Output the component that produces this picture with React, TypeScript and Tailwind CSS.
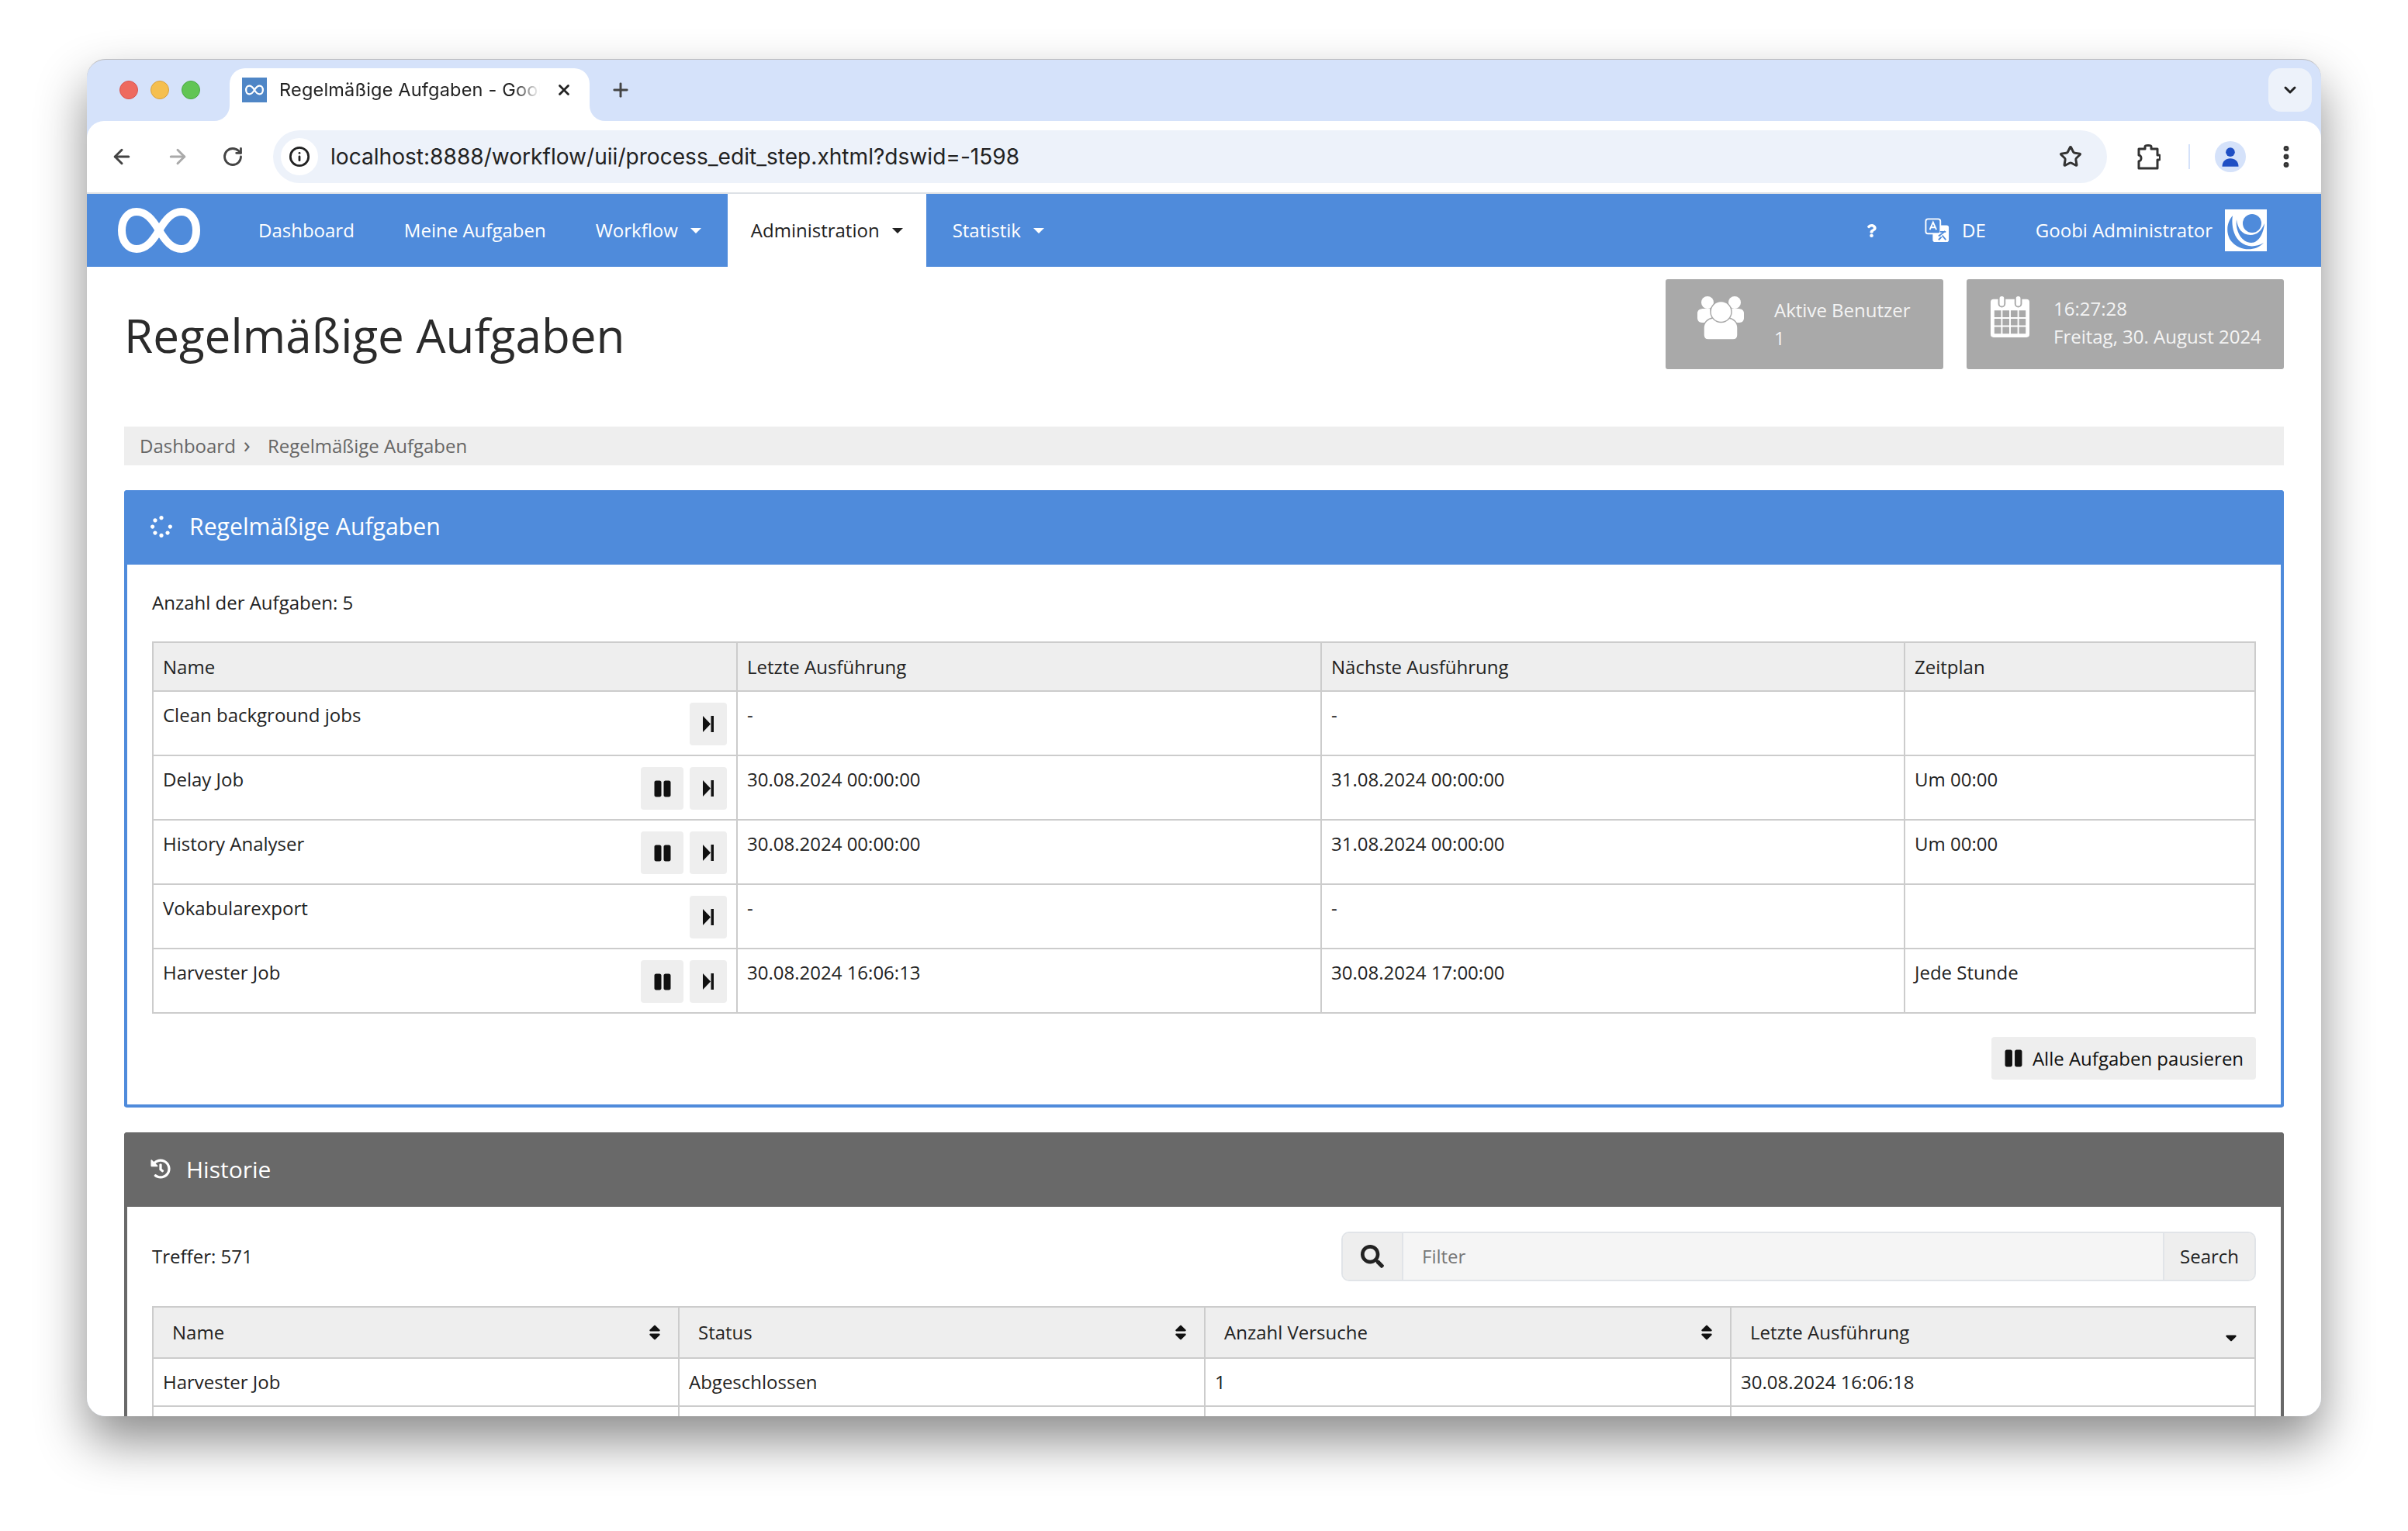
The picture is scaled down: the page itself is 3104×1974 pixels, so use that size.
import React from 'react';
import {
  ArrowLeft,
  ArrowRight,
  RotateCw,
  Info,
  Star,
  EllipsisVertical,
  ChevronDown,
  Plus,
  X,
} from 'lucide-react';
import {
  FaHistory,
  FaPause,
  FaSearch,
  FaSort,
  FaSortDown,
  FaSpinner,
  FaQuestion,
} from 'react-icons/fa';

const jobs = [
  { name: 'Clean background jobs', last: '-', next: '-', plan: '', pause: false },
  { name: 'Delay Job', last: '30.08.2024 00:00:00', next: '31.08.2024 00:00:00', plan: 'Um 00:00', pause: true },
  { name: 'History Analyser', last: '30.08.2024 00:00:00', next: '31.08.2024 00:00:00', plan: 'Um 00:00', pause: true },
  { name: 'Vokabularexport', last: '-', next: '-', plan: '', pause: false },
  { name: 'Harvester Job', last: '30.08.2024 16:06:13', next: '30.08.2024 17:00:00', plan: 'Jede Stunde', pause: true },
];

function Logo({ className }: { className: string }) {
  return (
    <svg viewBox="0 0 106 60" className={className} fill="none">
      <path
        d="M53 30C44 15 36 6 24 6C12 6 5 17 5 30C5 43 12 54 24 54C36 54 44 45 53 30C62 15 70 6 82 6C94 6 101 17 101 30C101 43 94 54 82 54C70 54 62 45 53 30Z"
        stroke="white"
        strokeWidth="10"
      />
    </svg>
  );
}

function Caret() {
  return <span className="ml-[16px] inline-block border-x-[7px] border-t-[7px] border-x-transparent border-t-current align-middle" />;
}

function NavItem({ label, caret, active }: { label: string; caret?: boolean; active?: boolean }) {
  return (
    <div className={`flex h-full items-center pl-[30px] ${active ? 'mr-[4px] bg-white pr-[30px] text-[#222]' : 'pr-[34px] text-white'}`}>
      {label}
      {caret && <Caret />}
    </div>
  );
}

function UsersIcon() {
  return (
    <svg viewBox="0 0 62 58" className="h-[58px] w-[62px]" fill="white">
      <circle cx="14" cy="9" r="8" />
      <circle cx="49" cy="9" r="8" />
      <path d="M1 23c0-4 3-6 8-6h8l4 18H7c-4 0-6-3-6-6z" />
      <path d="M61 23c0-4-3-6-8-6h-8l-4 18h14c4 0 6-3 6-6z" />
      <path
        d="M9 42c0-7 5-12 12-13h20c7 1 12 6 12 13v9c0 4-3 6-6 6H15c-3 0-6-2-6-6z"
        stroke="#a9a9a9"
        strokeWidth="1.5"
      />
      <circle cx="31.5" cy="21" r="13.5" stroke="#a9a9a9" strokeWidth="1.5" />
    </svg>
  );
}

function CalendarIcon() {
  return (
    <svg viewBox="0 0 54 58" className="h-[56px] w-[52px]">
      <rect x="1" y="6" width="52" height="51" rx="4" fill="white" />
      <rect x="12" y="1" width="8" height="15" rx="4" fill="white" stroke="#a9a9a9" strokeWidth="2" />
      <rect x="34" y="1" width="8" height="15" rx="4" fill="white" stroke="#a9a9a9" strokeWidth="2" />
      <path
        d="M5 20h44v33H5zM5 31h44M5 42h44M16 20v33M27 20v33M38 20v33"
        fill="#a9a9a9"
        stroke="white"
        strokeWidth="2"
      />
    </svg>
  );
}

function LanguageIcon() {
  return (
    <svg viewBox="0 0 34 34" className="h-[32px] w-[32px]" fill="none">
      <rect x="11" y="10" width="22" height="23" rx="3" fill="white" />
      <rect x="1.5" y="1.5" width="20" height="20" rx="3" fill="#4f8bdb" stroke="white" strokeWidth="2" />
      <path d="M7 16l4.5-10L16 16M8.5 13h6" stroke="white" strokeWidth="2" />
      <path d="M19 25l9-7M21 19h8M24 24l5 6M23 26l-4 4" stroke="#4f8bdb" strokeWidth="2" />
    </svg>
  );
}

function AvatarIcon() {
  return (
    <div className="ml-[16px] h-[54px] w-[54px] bg-white">
      <svg viewBox="0 0 54 54" className="h-full w-full" fill="#4f8bdb">
        <circle cx="35" cy="18" r="12" />
        <path d="M15 13C13 28 22 43 34 43C44 43 50 30 51 18C47 28 41 33 33 33C22 33 16 24 15 13Z" />
        <path d="M10 8C1 18 1 34 10 43C18 52 38 56 50 43C40 49 28 49 20 42C11 35 8 20 10 8Z" />
      </svg>
    </div>
  );
}

function PuzzleIcon() {
  return (
    <svg viewBox="0 0 30 33" className="ml-[39px] h-[33px] w-[30px]" fill="none" stroke="#333" strokeWidth="3" strokeLinejoin="round">
      <path d="M2 6h8V3c0-2 8-2 8 0v3h8v8h2c2 0 2 6 0 6h-2v11H2V22c3-1 3-2 3-4s0-3-3-4z" />
    </svg>
  );
}

function StepIcon() {
  return (
    <svg viewBox="0 0 14 21" className="h-[21px] w-[14px]" fill="currentColor">
      <path d="M0 0l10 10.500L0 21z" />
      <rect x="10.500" y="0" width="3.500" height="21" />
    </svg>
  );
}

function SquareButton({ children, className }: { children: React.ReactNode; className: string }) {
  return (
    <button type="button" className={`flex h-[55px] items-center justify-center rounded-[4px] bg-[#eee] text-[#111] ${className}`}>
      {children}
    </button>
  );
}

function InfoCard({ icon, top, bottom, className, iconBox, textBox }: { icon: React.ReactNode; top: string; bottom: string; className: string; iconBox: string; textBox: string }) {
  return (
    <div className={`flex h-[116px] rounded-[3px] bg-[#a9a9a9] text-[#f4f4f4] ${className}`}>
      <div className={iconBox}>{icon}</div>
      <div className={`flex flex-col leading-[36px] ${textBox}`}>
        <span>{top}</span>
        <span>{bottom}</span>
      </div>
    </div>
  );
}

const th = 'border-2 border-[#ccc] bg-[#eee] px-[12px] text-left font-normal';
const td = 'border-2 border-[#ccc] px-[12px]';

export default function App() {
  return (
    <div className="h-[1974px] w-[3104px] overflow-hidden bg-white pl-[112px] pt-[76px] font-['Open_Sans',sans-serif] text-[24px] text-[#222]">
      <div className="flex h-[1750px] w-[2880px] flex-col overflow-hidden rounded-[24px] border-t border-[#bbb] bg-[#d5e2fa] shadow-[0_32px_64px_rgba(0,0,0,0.45)]">
        {/* tab strip */}
        <div className="flex h-[79px] shrink-0 items-end font-['Inter',sans-serif] text-[23px]">
          <div className="flex h-[68px] w-[184px] items-start gap-[16px] pl-[42px] pt-[16px]">
            <span className="h-[24px] w-[24px] rounded-full border border-[#d9534f] bg-[#ee6a5f]" />
            <span className="h-[24px] w-[24px] rounded-full border border-[#d9a13c] bg-[#f5bf4f]" />
            <span className="h-[24px] w-[24px] rounded-full border border-[#4aa845] bg-[#61c554]" />
          </div>
          <div className="relative flex h-[68px] w-[464px] items-start rounded-t-[20px] bg-white pl-[16px] pt-[12px] text-[#222]">
            <span className="absolute -left-[20px] bottom-0 h-[20px] w-[20px] bg-white">
              <span className="block h-full w-full rounded-br-[20px] bg-[#d5e2fa]" />
            </span>
            <span className="absolute -right-[20px] bottom-0 h-[20px] w-[20px] bg-white">
              <span className="block h-full w-full rounded-bl-[20px] bg-[#d5e2fa]" />
            </span>
            <span className="flex h-[32px] w-[32px] items-center justify-center bg-[#4f86c6]">
              <Logo className="h-[14px] w-[24px]" />
            </span>
            <span className="ml-[16px] w-[336px] overflow-hidden whitespace-nowrap text-[23.500px] leading-[32px] tracking-[0.2px] text-[#222] [mask-image:linear-gradient(90deg,black_90%,transparent)]">
              Regelmäßige Aufgaben - Goobi
            </span>
            <X className="ml-[20px] mt-[5px] h-[22px] w-[22px] text-[#222]" strokeWidth={3} />
          </div>
          <Plus className="mb-[26px] ml-[26px] h-[28px] w-[28px] text-[#444]" strokeWidth={2.5} />
          <div className="mb-[12px] ml-auto mr-[12px] flex h-[56px] w-[56px] items-center justify-center rounded-[16px] bg-[#edf2fa]">
            <ChevronDown className="h-[24px] w-[24px] text-[#222]" strokeWidth={3} />
          </div>
        </div>

        {/* toolbar */}
        <div className="flex h-[94px] shrink-0 items-center rounded-t-[22px] border-b-2 border-[#dde1e6] bg-white text-[#444]">
          <div className="flex w-[240px] items-center gap-[42px] pl-[30px]">
            <ArrowLeft className="h-[30px] w-[30px]" strokeWidth={2.4} />
            <ArrowRight className="h-[30px] w-[30px] text-[#aaa]" strokeWidth={2.4} />
            <RotateCw className="h-[28px] w-[28px]" strokeWidth={2.4} />
          </div>
          <div className="flex h-[68px] w-[2364px] items-center rounded-full bg-[#edf2fa] pl-[10px] pr-[32px]">
            <span className="flex h-[48px] w-[48px] items-center justify-center rounded-full bg-white">
              <Info className="h-[28px] w-[28px] text-[#222]" strokeWidth={2.4} />
            </span>
            <span className="ml-[16px] font-['Inter',sans-serif] text-[28.100px] text-[#222]">
              localhost:8888/workflow/uii/process_edit_step.xhtml?dswid=-1598
            </span>
            <Star className="ml-auto h-[30px] w-[30px] text-[#333]" strokeWidth={2.4} />
          </div>
          <PuzzleIcon />
          <span className="ml-[36px] h-[32px] w-[2px] bg-[#d5e2fa]" />
          <span className="ml-[32px] flex h-[40px] w-[40px] items-center justify-center rounded-full bg-[#d5e2fa]">
            <svg viewBox="0 0 24 24" className="h-[28px] w-[28px]" fill="#1f4fc4">
              <circle cx="12" cy="7" r="5" />
              <path d="M3 23c0-6 4-9 9-9s9 3 9 9z" />
            </svg>
          </span>
          <EllipsisVertical className="ml-[34px] h-[36px] w-[36px] text-[#333]" strokeWidth={2.6} />
        </div>

        {/* page */}
        <div className="flex min-h-0 flex-1 flex-col overflow-hidden bg-white">
          <nav className="flex h-[94px] shrink-0 items-center bg-[#4f8bdb] pl-[40px] pr-[70px]">
            <Logo className="mr-[45px] h-[60px] w-[106px]" />
            <NavItem label="Dashboard" />
            <NavItem label="Meine Aufgaben" />
            <NavItem label="Workflow" caret />
            <NavItem label="Administration" caret active />
            <NavItem label="Statistik" caret />
            <div className="ml-auto flex items-center text-white">
              <FaQuestion className="h-[17px] w-[17px]" />
              <span className="ml-[60px]">
                <LanguageIcon />
              </span>
              <span className="ml-[16px]">DE</span>
              <span className="ml-[64px]">Goobi Administrator</span>
              <AvatarIcon />
            </div>
          </nav>

          <div className="flex flex-col px-[48px]">
            <header className="flex h-[206px] justify-between pt-[16px]">
              <h1 className="pt-[32px] text-[60.200px] leading-[80px] text-[#2b2b2b]">Regelmäßige Aufgaben</h1>
              <div className="flex gap-[30px]">
                <InfoCard
                  className="w-[358px]"
                  iconBox="pl-[40px] pr-[38px] pt-[21px]"
                  textBox="pt-[22px]"
                  icon={<UsersIcon />}
                  top="Aktive Benutzer"
                  bottom="1"
                />
                <InfoCard
                  className="w-[409px]"
                  iconBox="pl-[30px] pr-[30px] pt-[20px]"
                  textBox="pt-[20px]"
                  icon={<CalendarIcon />}
                  top="16:27:28"
                  bottom="Freitag, 30. August 2024"
                />
              </div>
            </header>

            <div className="flex h-[50px] items-center bg-[#eee] px-[20px] text-[#666]">
              Dashboard <span className="ml-[10px] mr-[22px] pb-[4px] text-[30px] leading-none">›</span> Regelmäßige Aufgaben
            </div>

            {/* jobs */}
            <section className="mt-[32px] rounded-[4px] border-4 border-t-0 border-[#4f8bdb]">
              <div className="-mx-[4px] flex h-[96px] items-center rounded-t-[4px] bg-[#4f8bdb] pb-[2px] pl-[34px] text-[30.200px] text-white">
                <FaSpinner className="h-[28px] w-[28px]" />
                <span className="ml-[22px]">Regelmäßige Aufgaben</span>
              </div>
              <div className="flex flex-col px-[32px] pb-[32px]">
                <p className="flex h-[99px] items-center pb-[1px]">Anzahl der Aufgaben: 5</p>
                <table className="w-full table-fixed border-collapse">
                  <thead>
                    <tr className="h-[63px]">
                      <th className={`${th} w-[753px]`}>Name</th>
                      <th className={`${th} w-[753px]`}>Letzte Ausführung</th>
                      <th className={`${th} w-[752px]`}>Nächste Ausführung</th>
                      <th className={th}>Zeitplan</th>
                    </tr>
                  </thead>
                  <tbody>
                    {jobs.map((job) => (
                      <tr key={job.name} className="h-[83px]">
                        <td className={`${td} pt-[12px] align-top`}>
                          <div className="flex items-start justify-between">
                            <span className="leading-[36px]">{job.name}</span>
                            <div className="flex gap-[8px] pt-[2px]">
                              {job.pause && (
                                <SquareButton className="w-[55px]">
                                  <FaPause className="h-[24px] w-[24px]" />
                                </SquareButton>
                              )}
                              <SquareButton className="w-[48px]">
                                <StepIcon />
                              </SquareButton>
                            </div>
                          </div>
                        </td>
                        <td className={`${td} pt-[12px] align-top leading-[36px]`}>{job.last}</td>
                        <td className={`${td} pt-[12px] align-top leading-[36px]`}>{job.next}</td>
                        <td className={`${td} pt-[12px] align-top leading-[36px]`}>{job.plan}</td>
                      </tr>
                    ))}
                  </tbody>
                </table>
                <div className="mt-[30px] flex justify-end">
                  <SquareButton className="w-[341px] gap-[12px]">
                    <FaPause className="h-[25px] w-[25px]" />
                    Alle Aufgaben pausieren
                  </SquareButton>
                </div>
              </div>
            </section>

            {/* history */}
            <section className="mt-[32px] rounded-[4px] border-4 border-t-0 border-[#696969]">
              <div className="-mx-[4px] flex h-[96px] items-center rounded-t-[4px] bg-[#696969] pb-[2px] pl-[34px] text-[30px] text-white">
                <FaHistory className="h-[26px] w-[26px]" />
                <span className="ml-[20px]">Historie</span>
              </div>
              <div className="flex flex-col px-[32px]">
                <div className="flex items-center justify-between pt-[32px]">
                  <span>Treffer: 571</span>
                  <div className="flex h-[64px] w-[1179px] overflow-hidden rounded-[10px] border-2 border-[#e1e4e8] bg-[#f5f5f5]">
                    <span className="flex w-[78px] items-center justify-center border-r-2 border-[#e1e4e8] bg-[#eee] text-[#222]">
                      <FaSearch className="h-[30px] w-[30px]" />
                    </span>
                    <input
                      readOnly
                      placeholder="Filter"
                      className="min-w-0 flex-1 bg-transparent pl-[24px] text-[#777] outline-none placeholder:text-[#777]"
                    />
                    <span className="flex w-[118px] items-center justify-center border-l-2 border-[#e1e4e8] bg-[#eee]">
                      Search
                    </span>
                  </div>
                </div>
                <table className="mt-[32px] w-full table-fixed border-collapse">
                  <thead>
                    <tr className="h-[66px]">
                      {['Name', 'Status', 'Anzahl Versuche'].map((label) => (
                        <th key={label} className={`${th} w-[678px]`}>
                          <div className="flex items-center justify-between pl-[12px] pr-[6px]">
                            {label}
                            <FaSort className="h-[24px] w-[24px] text-[#111]" />
                          </div>
                        </th>
                      ))}
                      <th className={th}>
                        <div className="flex items-center justify-between pl-[12px] pr-[6px]">
                          Letzte Ausführung
                          <FaSortDown className="mt-[4px] h-[24px] w-[24px] text-[#111]" />
                        </div>
                      </th>
                    </tr>
                  </thead>
                  <tbody>
                    <tr className="h-[62px]">
                      <td className={td}>Harvester Job</td>
                      <td className={td}>Abgeschlossen</td>
                      <td className={td}>1</td>
                      <td className={td}>30.08.2024 16:06:18</td>
                    </tr>
                    <tr className="h-[62px]">
                      <td className={td} />
                      <td className={td} />
                      <td className={td} />
                      <td className={td} />
                    </tr>
                  </tbody>
                </table>
              </div>
            </section>
          </div>
        </div>
      </div>
    </div>
  );
}
